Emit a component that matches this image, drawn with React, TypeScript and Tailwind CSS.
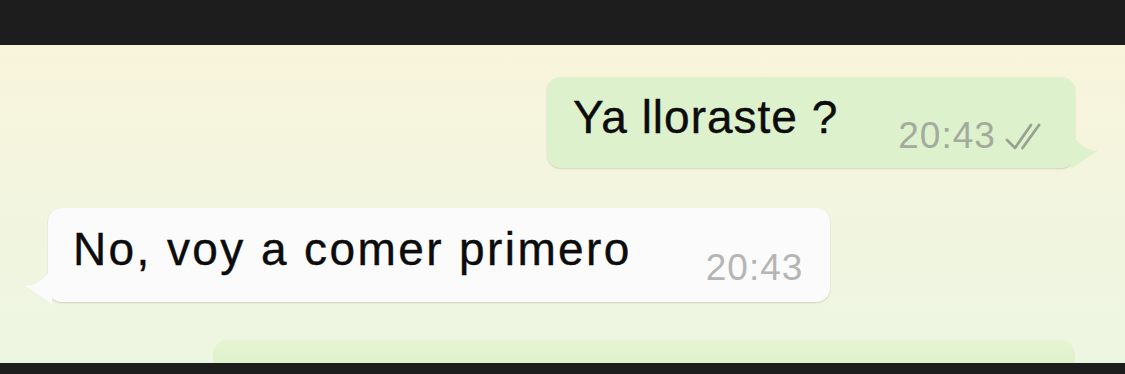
const font = { fontFamily: '"Liberation Sans", Arial, sans-serif' };

function DoubleCheck() {
  return (
    <svg width="46" height="30" viewBox="0 0 46 30" fill="none" className="mt-[45px] ml-[8px]">
      <path
        d="M3 18 L11 26 L27 3 M18.5 26 L35 3"
        stroke="#98a291"
        strokeWidth="2.8"
        strokeLinecap="round"
        strokeLinejoin="round"
      />
    </svg>
  );
}

export default function App() {
  return (
    <div className="flex h-[374px] w-[1125px] flex-col overflow-hidden" style={font}>
      <div className="h-[45px] shrink-0 bg-[#1d1d1d]" />

      <div className="relative flex h-[318px] shrink-0 flex-col overflow-hidden bg-linear-to-b from-[#f9f4dc] via-[#f2f5df] to-[#edf6e2]">
        <div className="flex justify-end pr-[50px] pt-[32px]">
          <div className="relative flex h-[91px] w-[528px] items-start rounded-[14px] bg-[#def1cd] pl-[26px] shadow-[0_1px_2px_rgba(0,0,0,0.14)]">
            <span className="pt-[17px] text-[46px] leading-[46px] tracking-[1px] text-[#0c0c0c] [-webkit-text-stroke:0.4px_#0c0c0c]">
              Ya lloraste ?
            </span>
            <span className="ml-[60px] mt-[40px] text-[37px] leading-[37px] tracking-[1px] text-[#a3ab9c]">
              20:43
            </span>
            <DoubleCheck />
            <svg
              width="30"
              height="44"
              viewBox="0 0 30 44"
              className="absolute right-[-26px] top-[52px]"
            >
              <path d="M0 4 C8 16 16 22 27 22 C18 27 9 34 0 40 Z" fill="#def1cd" />
            </svg>
          </div>
        </div>

        <div className="flex pl-[48px] pt-[40px]">
          <div className="relative flex h-[94px] w-[782px] items-start rounded-[14px] bg-[#fbfbfb] pl-[25px] shadow-[0_1px_2px_rgba(0,0,0,0.14)]">
            <span className="pt-[18px] text-[46px] leading-[46px] tracking-[2.4px] text-[#0c0c0c] [-webkit-text-stroke:0.4px_#0c0c0c]">
              No, voy a comer primero
            </span>
            <span className="ml-[74px] mt-[41px] text-[37px] leading-[37px] tracking-[1px] text-[#b5b5b5]">
              20:43
            </span>
            <svg
              width="30"
              height="44"
              viewBox="0 0 30 44"
              className="absolute left-[-26px] top-[56px]"
            >
              <path d="M30 4 C22 16 14 22 3 22 C12 27 21 34 30 40 Z" fill="#fbfbfb" />
            </svg>
          </div>
        </div>

        <div className="flex pl-[213px] pr-[50px] pt-[38px]">
          <div className="h-[40px] w-full rounded-[14px] bg-linear-to-b from-[#e6f3d3] to-[#dcefc6]" />
        </div>
      </div>

      <div className="h-[11px] shrink-0 bg-[#1d1d1d]" />
    </div>
  );
}
